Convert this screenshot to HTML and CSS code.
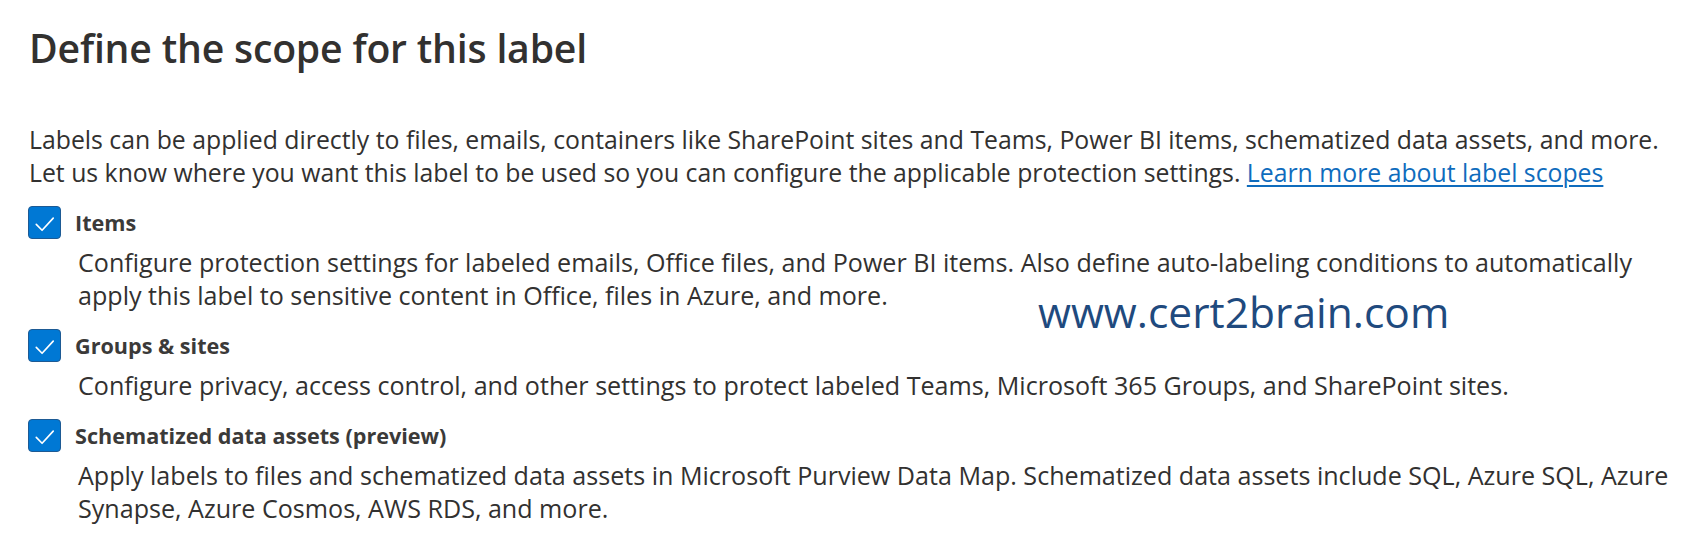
FILE: index.html
```html
<!DOCTYPE html>
<html lang="en">
<head>
<meta charset="utf-8">
<title>Define the scope for this label</title>
<link rel="stylesheet" href="styles.css">
</head>
<body>
<main class="page">
  <h1 class="title">Define the scope for this label</h1>
  <p class="intro">Labels can be applied directly to files, emails, containers like SharePoint sites and Teams, Power BI items, schematized data assets, and more.<br>Let us know where you want this label to be used so you can configure the applicable protection settings. <a class="link" href="#">Learn more about label scopes</a></p>

  <div class="scope">
    <div class="scope-head">
      <span class="check"><svg viewBox="0 0 32 32" width="32" height="32"><path d="M7.5 17.5l6 6L25 11" fill="none" stroke="#fff" stroke-width="1.7" stroke-linecap="round" stroke-linejoin="round"/></svg></span>
      <span class="scope-label">Items</span>
    </div>
    <p class="scope-desc">Configure protection settings for labeled emails, Office files, and Power BI items. Also define auto-labeling conditions to automatically<br>apply this label to sensitive content in Office, files in Azure, and more.</p>
  </div>

  <div class="scope">
    <div class="scope-head">
      <span class="check"><svg viewBox="0 0 32 32" width="32" height="32"><path d="M7.5 17.5l6 6L25 11" fill="none" stroke="#fff" stroke-width="1.7" stroke-linecap="round" stroke-linejoin="round"/></svg></span>
      <span class="scope-label">Groups &amp; sites</span>
    </div>
    <p class="scope-desc">Configure privacy, access control, and other settings to protect labeled Teams, Microsoft 365 Groups, and SharePoint sites.</p>
  </div>

  <div class="scope">
    <div class="scope-head">
      <span class="check"><svg viewBox="0 0 32 32" width="32" height="32"><path d="M7.5 17.5l6 6L25 11" fill="none" stroke="#fff" stroke-width="1.7" stroke-linecap="round" stroke-linejoin="round"/></svg></span>
      <span class="scope-label">Schematized data assets (preview)</span>
    </div>
    <p class="scope-desc">Apply labels to files and schematized data assets in Microsoft Purview Data Map. Schematized data assets include SQL, Azure SQL, Azure<br>Synapse, Azure Cosmos, AWS RDS, and more.</p>
  </div>

  <div class="watermark">www.cert2brain.com</div>
</main>
</body>
</html>
```

FILE: styles.css
```css
html, body {
  margin: 0;
  padding: 0;
  background: #ffffff;
}

.page {
  position: relative;
  padding: 22px 0 0 29px;
  font-family: "Open Sans", "Noto Sans", sans-serif;
  color: #323130;
  font-size: 24.8px;
  line-height: 33px;
}

.title {
  margin: 0;
  font-size: 39.2px;
  line-height: 52px;
  font-weight: 600;
  color: #323130;
  letter-spacing: -0.2px;
}

.intro {
  margin: 49px 0 0 0;
  white-space: nowrap;
}

.link {
  color: #0f6cbd;
  text-decoration: underline;
  text-decoration-thickness: 1.5px;
  text-underline-offset: 3px;
}

.scope {
  margin-top: 17px;
}

.scope-head {
  display: flex;
  align-items: center;
  gap: 14px;
}

.check {
  box-sizing: border-box;
  width: 33px;
  height: 33px;
  border-radius: 4px;
  border: 1px solid #1d5a94;
  background: #0078d4;
  display: flex;
  align-items: center;
  justify-content: center;
  flex: 0 0 auto;
  margin-left: -1px;
}

.scope-label {
  font-weight: 700;
  font-size: 21.6px;
  color: #3b3a39;
}

.scope-desc {
  margin: 7px 0 0 49px;
  white-space: nowrap;
  font-size: 25.1px;
}

.watermark {
  position: absolute;
  left: 1038px;
  top: 284px;
  font-family: "Open Sans", "Noto Sans", sans-serif;
  font-size: 42.5px;
  line-height: 56px;
  color: #1f4a7e;
}
```
